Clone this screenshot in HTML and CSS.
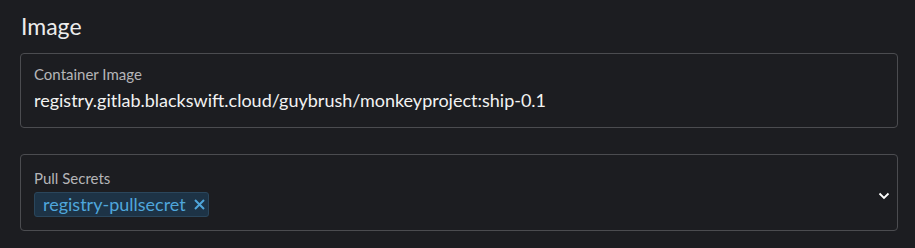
FILE: index.html
```html
<!DOCTYPE html>
<html lang="en">
<head>
    <meta charset="UTF-8">
    <title>Image</title>
    <link rel="stylesheet" href="styles.css">
</head>
<body>
    <div class="section">
        <h2>Image</h2>

        <!-- Container image field -->
        <div class="field">
            <label>Container Image</label>
            <div class="value">registry.gitlab.blackswift.cloud/guybrush/monkeyproject:ship-0.1</div>
        </div>

        <!-- Pull secrets select -->
        <div class="field select">
            <div class="select-body">
                <label>Pull Secrets</label>
                <div class="chips">
                    <span class="chip">registry-pullsecret
                        <svg class="chip-x" width="11" height="11" viewBox="0 0 11 11">
                            <path d="M1 1 L10 10 M10 1 L1 10" stroke="#4fa6db" stroke-width="2"/>
                        </svg>
                    </span>
                </div>
            </div>
            <svg class="chevron" width="12" height="8" viewBox="0 0 12 8">
                <path d="M1.5 1.5 L6 6 L10.5 1.5" fill="none" stroke="#ffffff" stroke-width="1.8"/>
            </svg>
        </div>
    </div>
</body>
</html>
```

FILE: styles.css
```css
body {
    margin: 0;
    background: #1c1d21;
    font-family: Lato, "Open Sans", sans-serif;
    color: #e6e6e6;
}
.section {
    padding: 12px 17px 0 20px;
}
h2 {
    margin: 0 0 12px 1px;
    font-size: 23px;
    font-weight: 400;
    line-height: 29px;
    color: #ececec;
}
.field {
    border: 1px solid #4b4c50;
    border-radius: 4px;
    padding: 11px 13px 0;
    height: 75px;
    box-sizing: border-box;
    margin-bottom: 26px;
}
label {
    display: block;
    font-size: 15px;
    line-height: 19px;
    color: #b5b5b8;
}
.value {
    font-size: 18px;
    line-height: 25px;
    margin-top: 4px;
    color: #f2f2f2;
}
.select {
    display: flex;
    align-items: center;
    height: 77px;
    padding: 12px 7px 0 13px;
}
.select-body {
    flex: 1;
    align-self: flex-start;
    padding-top: 2px;
}
.chips {
    margin-top: 4px;
}
.chip {
    display: inline-flex;
    align-items: center;
    gap: 8px;
    background: #1d3346;
    border: 1px solid #2a465c;
    border-radius: 3px;
    color: #4fa6db;
    font-size: 18px;
    line-height: 23px;
    padding: 0 3px 0 8px;
}
.chevron {
    margin-top: -6px;
}
```
